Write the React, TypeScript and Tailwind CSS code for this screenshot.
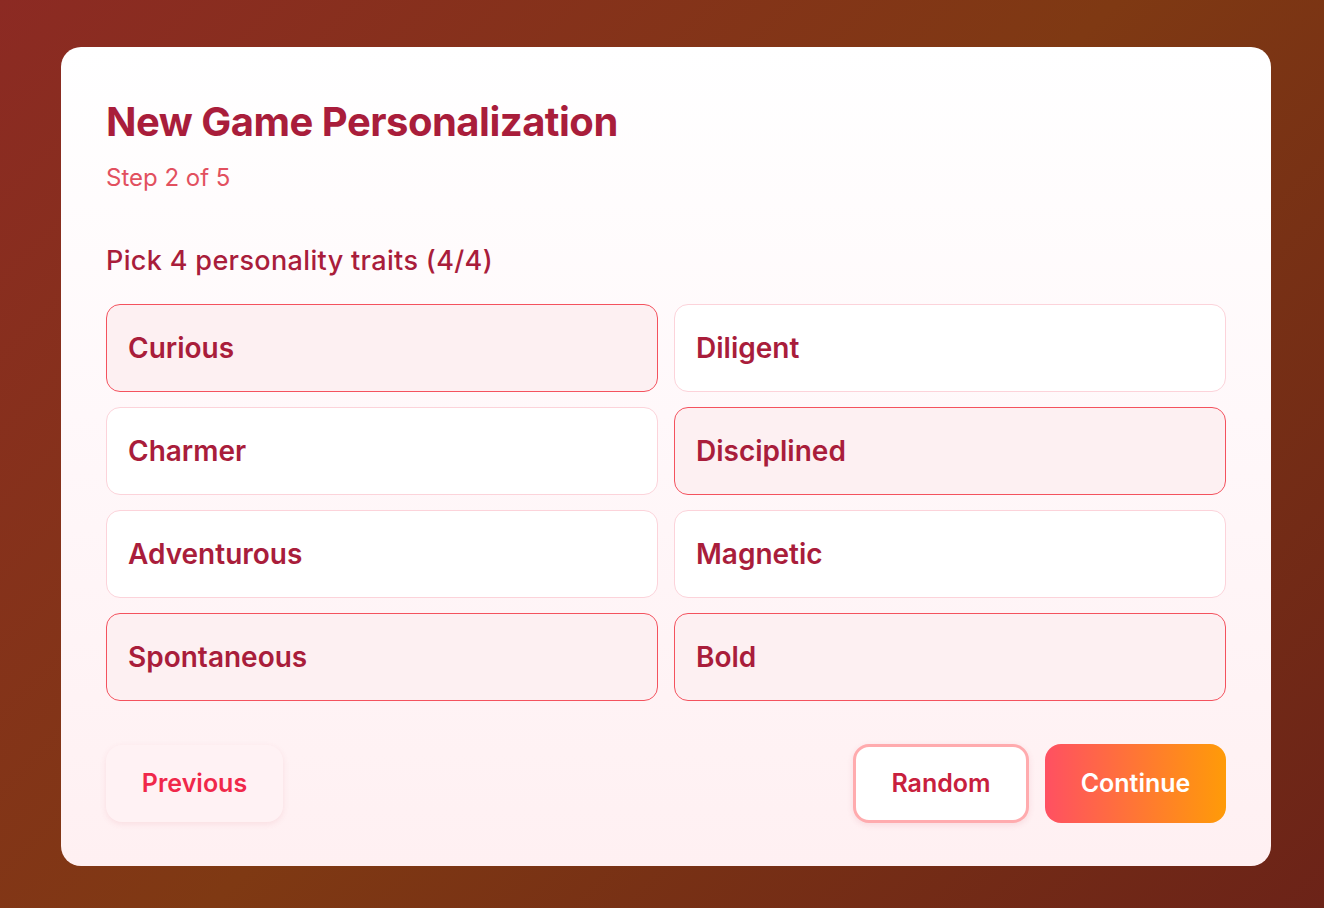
import React, { useState } from 'react';

const TRAITS = [
  'Curious',
  'Diligent',
  'Charmer',
  'Disciplined',
  'Adventurous',
  'Magnetic',
  'Spontaneous',
  'Bold',
];

const App: React.FC = () => {
  const [selected, setSelected] = useState<string[]>(['Curious', 'Disciplined', 'Spontaneous', 'Bold']);

  const toggle = (t: string) => {
    setSelected((prev) =>
      prev.includes(t) ? prev.filter((x) => x !== t) : prev.length < 4 ? [...prev, t] : prev
    );
  };

  return (
    <div
      className="min-h-[908px] w-full pt-[47px] pl-[61px] bg-[linear-gradient(135deg,#8c2a23_0%,#7f3913_50%,#6c2318_100%)]"
      style={{ fontFamily: 'Inter, "Noto Sans", sans-serif' }}
    >
      <div className="w-[1210px] h-[819px] rounded-[20px] bg-[linear-gradient(180deg,#ffffff_0%,#fff8fa_45%,#fff0f2_100%)] px-[45px] pt-[51px]">
        <h1 className="text-[40px] leading-[48px] font-bold tracking-[-0.5px] text-[#a91d3b]">
          New Game Personalization
        </h1>
        <p className="mt-[18px] text-[24px] leading-[28px] text-[#e2505f]">Step 2 of 5</p>

        <h2 className="mt-[53px] text-[27px] leading-[32px] font-medium tracking-[0.35px] text-[#a91d3b]">
          Pick 4 personality traits ({selected.length}/4)
        </h2>

        <div className="mt-[27px] grid grid-cols-2 gap-x-[16px] gap-y-[15px]">
          {TRAITS.map((t) => {
            const on = selected.includes(t);
            return (
              <button
                key={t}
                onClick={() => toggle(t)}
                className={`h-[88px] rounded-[14px] border text-left pl-[21px] text-[28px] font-semibold text-[#a91d3b] ${
                  on ? 'border-[#f4525e] bg-[#fdf0f2]' : 'border-[#fcd3da] bg-white'
                }`}
              >
                {t}
              </button>
            );
          })}
        </div>

        <div className="mt-[43px] flex items-center justify-between">
          <button className="h-[77px] w-[177px] rounded-[16px] bg-[#fff2f4] shadow-[0_2px_6px_rgba(200,60,80,0.10)] text-[25px] font-semibold text-[#f0284a]">
            Previous
          </button>
          <div className="flex gap-[16px]">
            <button className="h-[79px] w-[176px] rounded-[16px] border-[3px] border-[#ffabae] bg-white shadow-[0_2px_6px_rgba(200,60,80,0.12)] text-[25px] font-semibold text-[#c8203d]">
              Random
            </button>
            <button className="h-[79px] w-[181px] rounded-[16px] bg-[linear-gradient(90deg,#ff5062_0%,#ff9b08_100%)] text-[25px] font-semibold text-white">
              Continue
            </button>
          </div>
        </div>
      </div>
    </div>
  );
};

export default App;
